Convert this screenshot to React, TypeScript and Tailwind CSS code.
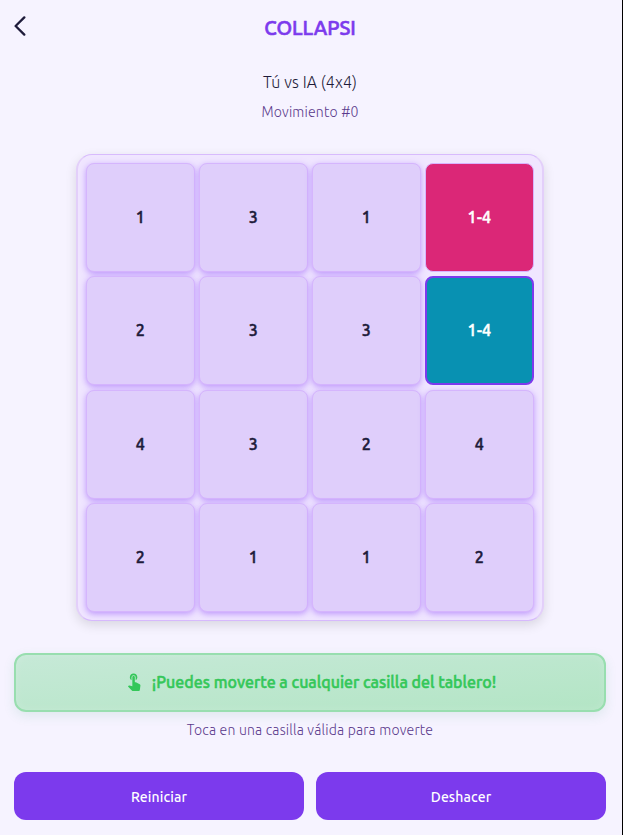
const rows = [
  ["1", "3", "1", "1-4"],
  ["2", "3", "3", "1-4"],
  ["4", "3", "2", "4"],
  ["2", "1", "1", "2"],
];

function tileStyle(row: number, col: number) {
  if (row === 0 && col === 3) return "border border-[#d8b4fe] bg-[#db2777] text-white";
  if (row === 1 && col === 3) return "border-2 border-[#7c3aed] bg-[#0891b2] text-white";
  return "border border-[#d5b5fd] bg-[#dfcefb] text-[#1e1b3a] shadow-[0_2px_6px_rgba(150,85,250,0.55)]";
}

function Tile({ value, row, col }: { value: string; row: number; col: number }) {
  return (
    <div className={`flex items-center justify-center rounded-lg pb-px text-base font-medium tracking-[0.3px] [-webkit-text-stroke:0.5px] ${tileStyle(row, col)}`}>
      <span>{value}</span>
    </div>
  );
}

function TouchIcon() {
  return (
    <svg viewBox="0 0 24 24" className="mb-[3px] h-5 w-5 shrink-0" fill="#34c759">
      <path d="M9 11.24V7.5a2.5 2.5 0 0 1 5 0v3.74c1.21-.81 2-2.18 2-3.74C16 5.01 13.99 3 11.5 3S7 5.01 7 7.5c0 1.56.79 2.93 2 3.74zm9.84 4.63-4.54-2.26c-.17-.07-.35-.11-.54-.11H13v-6c0-.83-.67-1.5-1.5-1.5S10 6.67 10 7.5v10.74l-3.43-.72c-.08-.01-.15-.03-.24-.03-.31 0-.59.13-.79.33l-.79.8 4.94 4.94c.27.27.65.44 1.06.44h6.79c.75 0 1.33-.55 1.44-1.28l.75-5.27c.01-.07.02-.14.02-.2 0-.62-.38-1.16-.91-1.38z" />
    </svg>
  );
}

export default function App() {
  return (
    <div className="h-[835px] w-[623px] overflow-hidden border-r border-black bg-[#f6f3ff] font-['Ubuntu','Open_Sans',sans-serif]">
      <main className="flex h-full w-[620px] flex-col items-center px-3.5">
        <header className="grid h-14 w-full shrink-0 grid-cols-[1fr_auto_1fr] items-center">
          <button aria-label="Volver" className="-mt-1">
            <svg viewBox="0 0 12 20" className="h-5 w-3" fill="none" stroke="#1e1b3a" strokeWidth="2.3" strokeLinecap="round" strokeLinejoin="round">
              <path d="M10.3 1.4 1.6 10l8.7 8.6" />
            </svg>
          </button>
          <h1 className="text-[20px] leading-7 font-medium text-[#7c3aed] [-webkit-text-stroke:0.6px]">COLLAPSI</h1>
        </header>
        <p className="mt-[14px] text-base leading-6 font-light tracking-[0.1px] text-[#1e1b3a]">Tú vs IA (4x4)</p>
        <p className="mt-2 text-sm leading-5 font-light tracking-[0.18px] text-[#5b3a8c]">Movimiento #0</p>

        <section className="mt-8 grid h-[467px] w-[468px] shrink-0 grid-cols-[repeat(4,109px)] grid-rows-[repeat(4,109px)] content-center justify-center gap-x-1 gap-y-[4.25px] rounded-2xl border-x-2 border-y border-x-[#e3cffa] border-y-[#d8bbfd] bg-[#f0e6ff] shadow-[0_4px_12px_rgba(0,0,0,0.12)]">
          {rows.map((row, r) => row.map((value, c) => <Tile key={`${r}-${c}`} value={value} row={r} col={c} />))}
        </section>

        <div className="mt-8 flex h-[59px] w-full shrink-0 items-center justify-center gap-2 rounded-xl border-2 border-[#98deaf] bg-linear-to-br from-[#c6e9d7] to-[#b3e5c5] pb-px shadow-[0_4px_12px_rgba(52,160,110,0.12),inset_0_0_8px_rgba(255,255,255,0.15)]">
          <TouchIcon />
          <span className="text-base font-medium whitespace-nowrap text-[#34c759] [-webkit-text-stroke:0.5px]">¡Puedes moverte a cualquier casilla del tablero!</span>
        </div>
        <p className="mt-2 text-sm leading-5 font-light tracking-[0.18px] text-[#5b3a8c]">Toca en una casilla válida para moverte</p>

        <div className="mt-8 grid h-12 w-full shrink-0 grid-cols-2 gap-3 text-sm font-medium tracking-[0.12px] text-white">
          <button className="rounded-xl bg-[#7c3aed] pt-0.5">Reiniciar</button>
          <button className="rounded-xl bg-[#7c3aed] pt-0.5">Deshacer</button>
        </div>
      </main>
    </div>
  );
}
